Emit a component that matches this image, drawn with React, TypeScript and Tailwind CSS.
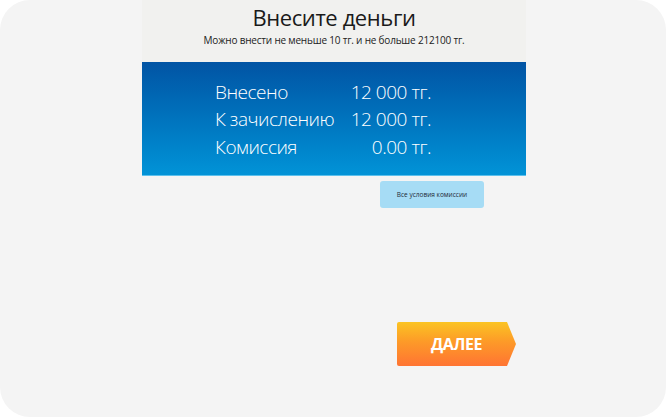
const rows = [
    { label: 'Внесено', value: '12 000 тг.' },
    { label: 'К зачислению', value: '12 000 тг.' },
    { label: 'Комиссия', value: '0.00 тг.' },
];

const App = () => {
    return (
        <div className="w-[669px] h-[419px] bg-white" style={{ fontFamily: '"Open Sans", "Noto Sans", sans-serif' }}>
            <div className="w-[666px] h-[417px] bg-[#f4f4f4] rounded-[30px] flex flex-col items-center">
                <div className="w-[384px] ml-[2px] flex flex-col">
                    <div className="h-[62px] bg-[#f1f1ef] flex flex-col items-center">
                        <h1 className="text-[22px] leading-none mt-[6px] text-[#1a1a1a] tracking-[-0.4px]">
                            Внесите деньги
                        </h1>
                        <p className="text-[10px] leading-none mt-[7px] text-[#222] tracking-[-0.2px]">
                            Можно внести не меньше 10 тг. и не больше 212100 тг.
                        </p>
                    </div>
                    <div className="h-[114px] bg-gradient-to-b from-[#0254a4] to-[#0293d7] border-b border-[#5cc0ec] pt-[16px] pl-[73px]">
                        {rows.map((row) => (
                            <div key={row.label} className="flex h-[27.5px] items-center text-white font-light text-[19px] tracking-tight">
                                <span className="w-[135px]">{row.label}</span>
                                <span className="w-[81px] text-right">{row.value}</span>
                            </div>
                        ))}
                    </div>
                    <div className="flex justify-end pr-[42px] mt-[5px]">
                        <button className="w-[104px] h-[27px] bg-[#a6dcf5] rounded-[3px] text-[6.5px] text-[#1e2a36] font-medium">
                            Все условия комиссии
                        </button>
                    </div>
                    <div className="flex justify-end pr-[10px] mt-[114px]">
                        <button className="relative w-[119px] h-[44px]">
                            <svg width="119" height="44" viewBox="0 0 119 44" className="absolute inset-0">
                                <defs>
                                    <linearGradient id="og" x1="0" y1="0" x2="0" y2="1">
                                        <stop offset="0" stopColor="#fbc423" />
                                        <stop offset="0.45" stopColor="#fd9a28" />
                                        <stop offset="1" stopColor="#ff7433" />
                                    </linearGradient>
                                </defs>
                                <path d="M2 0 H110 L119 22 L110 44 H2 Q0 44 0 42 V2 Q0 0 2 0 Z" fill="url(#og)" />
                            </svg>
                            <span className="relative text-white font-bold text-[16px] tracking-tight">ДАЛЕЕ</span>
                        </button>
                    </div>
                </div>
            </div>
        </div>
    );
};

export default App;
